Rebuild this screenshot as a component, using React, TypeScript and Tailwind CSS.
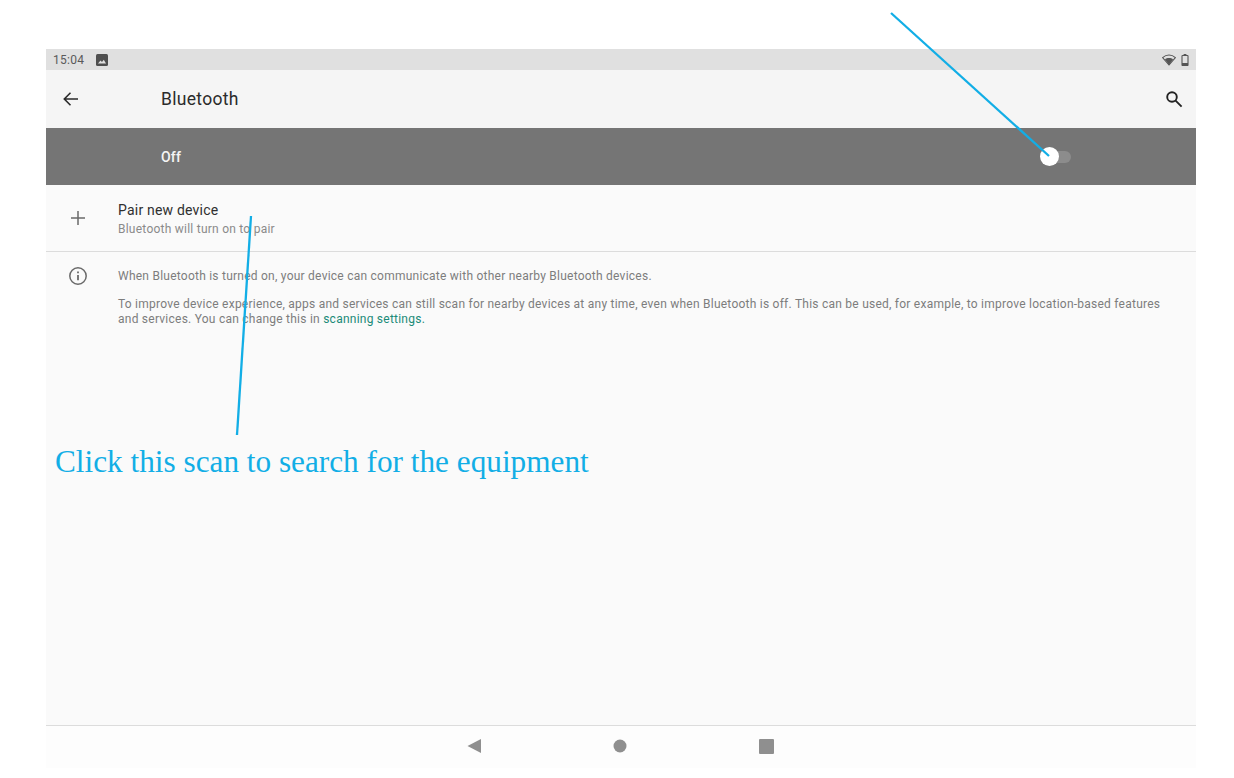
import React from "react";

const sans = "font-['Roboto','Liberation_Sans',sans-serif]";

function App() {
    return (
        <div className={`relative w-[1234px] h-[778px] bg-white overflow-hidden ${sans}`}>
            <div className="pt-[49px] pl-[46px] w-[1196px]">
                <div className="w-[1150px] h-[719px] flex flex-col bg-[#fafafa]">
                    {/* Status bar */}
                    <div className="h-[21px] shrink-0 bg-[#e0e0e0] flex items-center justify-between pl-[7px] pr-[7px]">
                        <div className="flex items-center gap-[12px]">
                            <span className="text-[12px] leading-none tracking-[0.3px] text-[#5a5a5a]">15:04</span>
                            <svg width="12" height="12" viewBox="0 0 12 12">
                                <rect width="12" height="12" rx="1.5" fill="#4f4f4f" />
                                <path d="M2 9.5 4.5 6.5 6 8 7.8 5.8 10 9.5Z" fill="#e0e0e0" />
                            </svg>
                        </div>
                        <div className="flex items-center gap-[5px]">
                            <svg width="14" height="12" viewBox="0 0 14 12">
                                <path d="M7 11 .6 3.6C2.4 2 4.6 1 7 1s4.6 1 6.4 2.6Z" fill="none" stroke="#555" strokeWidth="1.1" />
                                <path d="M7 11 2.9 5.3C4 4.5 5.4 4 7 4s3 .5 4.1 1.3Z" fill="#555" />
                            </svg>
                            <svg width="8" height="12" viewBox="0 0 8 12">
                                <rect x="1" y="1.5" width="6" height="10" rx="0.6" fill="none" stroke="#555" strokeWidth="1.1" />
                                <rect x="2.6" y="0" width="2.8" height="1.5" fill="#555" />
                                <rect x="1" y="9" width="6" height="2.5" fill="#555" />
                            </svg>
                        </div>
                    </div>

                    {/* App bar */}
                    <div className="h-[58px] shrink-0 bg-[#f5f5f5] flex items-center pl-[16px] pr-[13px]">
                        <svg width="18" height="18" viewBox="0 0 18 18" fill="none" stroke="#2a2a2a" strokeWidth="1.6">
                            <path d="M16 9H2.5M8.5 2.7 2.3 9l6.2 6.3" />
                        </svg>
                        <h1 className="ml-[81px] text-[17.5px] font-normal tracking-[0.3px] text-[#2b2b2b]">Bluetooth</h1>
                        <svg className="ml-auto" width="18" height="18" viewBox="0 0 18 18" fill="none" stroke="#222" strokeWidth="1.9">
                            <circle cx="7" cy="7" r="4.8" />
                            <path d="m10.6 10.6 6 6" />
                        </svg>
                    </div>

                    {/* Off bar */}
                    <div className="h-[57px] shrink-0 bg-[#757575] flex items-center pl-[115px] relative">
                        <span className="mt-[2px] text-[14px] font-medium tracking-[0.2px] text-[#f5f5f5]">Off</span>
                        <div className="absolute left-[1003px] top-[22.5px] w-[22px] h-[12px] rounded-full bg-[#8c8c8c]" />
                        <div className="absolute left-[994px] top-[19px] w-[19px] h-[19px] rounded-full bg-white" />
                    </div>

                    {/* Pair new device */}
                    <div className="h-[67px] shrink-0 flex items-center border-b border-[#dcdcdc]">
                        <div className="w-[72px] flex justify-center pr-[8px]">
                            <svg width="16" height="16" viewBox="0 0 16 16" stroke="#6a6a6a" strokeWidth="1.5">
                                <path d="M8 1v14M1 8h14" />
                            </svg>
                        </div>
                        <div className="flex flex-col gap-[2px] mt-[1px]">
                            <span className="text-[14px] leading-[18px] tracking-[0.2px] text-[#2f2f2f]">Pair new device</span>
                            <span className="text-[12px] leading-[16px] tracking-[0.24px] text-[#8a8a8a]">Bluetooth will turn on to pair</span>
                        </div>
                    </div>

                    {/* Info */}
                    <div className="flex pt-[14px] flex-1">
                        <div className="w-[72px] flex justify-center shrink-0 pr-[8px]">
                            <svg width="20" height="20" viewBox="0 0 20 20" fill="none" stroke="#6a6a6a">
                                <circle cx="10" cy="10" r="8.2" strokeWidth="1.5" />
                                <path d="M10 9v5.2" strokeWidth="1.8" />
                                <path d="M10 5.4v1.8" strokeWidth="1.8" />
                            </svg>
                        </div>
                        <div className="text-[12px] leading-[15px] tracking-[0.24px] text-[#7d7d7d] w-[1060px]">
                            <p className="pt-[3px]">When Bluetooth is turned on, your device can communicate with other nearby Bluetooth devices.</p>
                            <p className="mt-[13px]">
                                To improve device experience, apps and services can still scan for nearby devices at any time, even when Bluetooth is off. This can be used, for example, to improve location-based features and services. You can change this in{" "}
                                <span className="text-[#1a8a78]">scanning settings.</span>
                            </p>
                        </div>
                    </div>

                    {/* Nav bar */}
                    <div className="h-[43px] shrink-0 border-t border-[#dcdcdc] bg-[#fdfdfd] flex items-center justify-center gap-[132px] pr-[1px] pb-[2px]">
                        <svg width="14" height="14" viewBox="0 0 14 14"><path d="M0.5 7 14 0v14Z" fill="#8f8f8f" /></svg>
                        <svg width="14" height="14" viewBox="0 0 14 14"><circle cx="7" cy="7" r="6.5" fill="#8f8f8f" /></svg>
                        <svg width="15" height="15" viewBox="0 0 15 15"><rect width="15" height="15" rx="1" fill="#8f8f8f" /></svg>
                    </div>
                </div>
            </div>

            {/* Annotations */}
            <svg className="absolute inset-0" width="1234" height="778" fill="none" stroke="#12aee6" strokeWidth="2.3">
                <path d="M891 13 1049 156" />
                <path d="M251 216 237 435" />
            </svg>
            <p className="absolute left-[55px] top-[442px] font-['Liberation_Serif',serif] text-[31.25px] leading-[40px] text-[#12aee6] whitespace-nowrap">
                Click this scan to search for the equipment
            </p>
        </div>
    );
}

export default App;
